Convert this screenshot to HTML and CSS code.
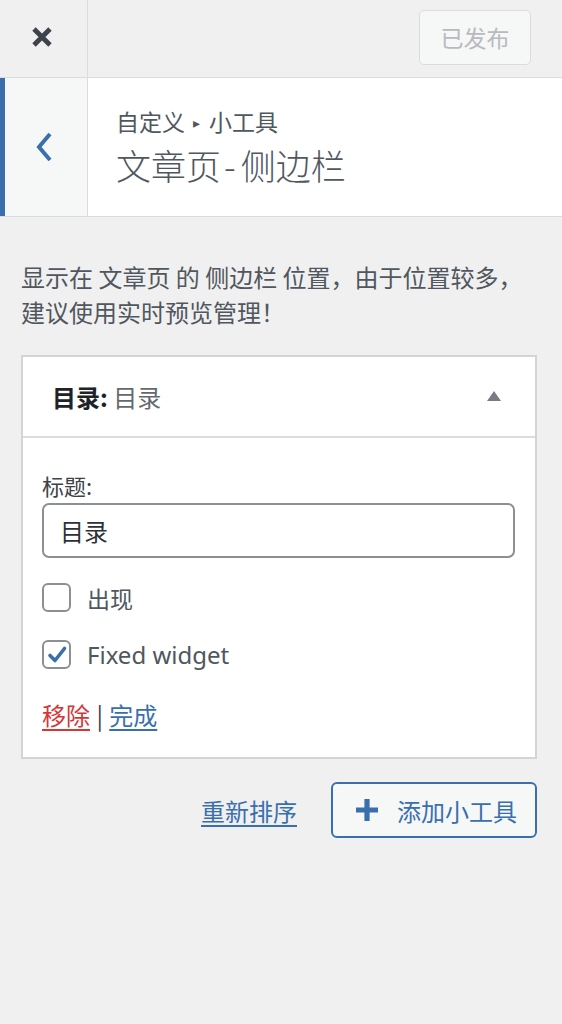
FILE: index.html
```html
<!DOCTYPE html>
<html lang="zh-CN">
<head>
<meta charset="utf-8">
<title>自定义 小工具</title>
<link rel="stylesheet" href="styles.css">
</head>
<body>
<div class="panel">
  <header class="topbar">
    <div class="close">
      <svg width="22" height="22" viewBox="0 0 22 22"><path d="M3 3 L19 19 M19 3 L3 19" stroke="#3c434a" stroke-width="4.8" stroke-linecap="butt" fill="none"/></svg>
    </div>
    <div class="topbar-fill"></div>
    <button class="publish" disabled>已发布</button>
  </header>

  <section class="section-head">
    <div class="back">
      <svg width="18" height="30" viewBox="0 0 18 30"><path d="M14 2 L3 15 L14 28" stroke="#3a6fae" stroke-width="4" fill="none" stroke-linejoin="miter"/></svg>
    </div>
    <div class="titles">
      <div class="crumb">自定义<span class="tri">▸</span>小工具</div>
      <div class="title">文章页<span class="dash">-</span>侧边栏</div>
    </div>
  </section>

  <p class="desc">显示在 文章页 的 侧边栏 位置，由于位置较多，<br>建议使用实时预览管理！</p>

  <div class="widget">
    <div class="widget-top">
      <div class="widget-title"><strong>目录:</strong> <span class="in-title">目录</span></div>
      <svg class="arrow" width="16" height="12" viewBox="0 0 16 12"><path d="M8 1 L15 11 L1 11 Z" fill="#787c82"/></svg>
    </div>
    <div class="widget-inside">
      <label class="field-label">标题:</label>
      <div class="input">目录</div>
      <div class="check-row">
        <span class="checkbox"></span>
        <span class="check-label">出现</span>
      </div>
      <div class="check-row">
        <span class="checkbox">
          <svg width="22" height="22" viewBox="0 0 22 22"><path d="M4 11.5 L9 16.5 L18.5 4.5" stroke="#3a6fae" stroke-width="3.6" fill="none" stroke-linecap="round" stroke-linejoin="round"/></svg>
        </span>
        <span class="check-label latin">Fixed widget</span>
      </div>
      <div class="actions">
        <a class="remove" href="#">移除</a> <span class="sep">|</span> <a class="done" href="#">完成</a>
      </div>
    </div>
  </div>

  <div class="footer-row">
    <a class="reorder" href="#">重新排序</a>
    <button class="add">
      <svg width="24" height="24" viewBox="0 0 24 24"><path d="M12 1 V23 M1 12 H23" stroke="#3a6fae" stroke-width="5.2" fill="none"/></svg>
      <span>添加小工具</span>
    </button>
  </div>
</div>
</body>
</html>
```
FILE: styles.css
```css
* { box-sizing: border-box; }
html, body { margin: 0; padding: 0; }
body {
  background: #f0f0f1;
  font-family: "Noto Sans", "Noto Sans CJK SC", sans-serif;
  font-size: 24px;
  color: #50575e;
  height: 1024px;
}
.panel { width: 562px; }

.topbar {
  display: flex;
  align-items: flex-start;
  height: 78px;
  border-bottom: 1px solid #dcdcde;
}
.close {
  width: 88px;
  height: 77px;
  border-right: 1px solid #dcdcde;
  display: flex;
  align-items: center;
  justify-content: center;
  padding-right: 3px;
  padding-bottom: 3px;
}
.topbar-fill { flex: 1; }
.publish {
  margin: 10px 31px 0 0;
  width: 112px;
  height: 55px;
  border: 1px solid #dcdcde;
  background: #f6f7f7;
  color: #b8babd;
  border-radius: 5px;
  font-family: "Noto Sans CJK SC", sans-serif;
  font-size: 23px;
  line-height: 1;
  padding: 0;
}

.section-head {
  display: flex;
  height: 139px;
  background: #fff;
  border-bottom: 1px solid #dcdcde;
}
.back {
  width: 88px;
  background: #f6f7f7;
  border-left: 5px solid #3a6fae;
  border-right: 1px solid #dcdcde;
  display: flex;
  align-items: center;
  justify-content: center;
  padding-right: 3px;
  padding-bottom: 1px;
}
.titles {
  padding: 25px 0 0 28px;
}
.crumb {
  font-family: "Noto Sans CJK SC", sans-serif;
  font-size: 23px;
  line-height: 36px;
  color: #50575e;
}
.tri { font-size: 14px; vertical-align: 3px; margin: 0 9px 0 8px; }
.title {
  font-family: "Noto Sans CJK SC", sans-serif;
  font-size: 35px;
  font-weight: 300;
  line-height: 50px;
  color: #50575e;
}
.dash { margin: 0 5px 0 3px; }

.desc {
  margin: 42px 0 0 0;
  padding: 0 21px;
  font-family: "Noto Sans CJK SC", sans-serif;
  font-size: 24px;
  line-height: 35px;
  color: #50575e;
}

.widget {
  margin: 26px 25px 0 21px;
  background: #fff;
  border: 2px solid #d3d4d7;
}
.widget-top {
  display: flex;
  align-items: center;
  justify-content: space-between;
  height: 81px;
  padding: 0 33px 0 29px;
  border-bottom: 2px solid #dcdcde;
}
.widget-title {
  font-family: "Noto Sans CJK SC", sans-serif;
  font-size: 24px;
  color: #1d2327;
}
.widget-title strong { font-weight: 700; }
.in-title { color: #646970; }
.arrow { margin-bottom: 2px; }

.widget-inside {
  padding: 30px 20px 25px 19px;
}
.field-label {
  display: block;
  font-family: "Noto Sans CJK SC", sans-serif;
  font-size: 22px;
  line-height: 34px;
  color: #3c434a;
}
.input {
  margin-top: 1px;
  height: 55px;
  border: 2px solid #8c8f94;
  border-radius: 7px;
  padding: 0 16px;
  display: flex;
  align-items: center;
  font-family: "Noto Sans CJK SC", sans-serif;
  font-size: 24px;
  color: #2c3338;
}
.check-row {
  display: flex;
  align-items: center;
  gap: 16px;
  height: 29px;
  margin-top: 25px;
}
.check-row + .check-row { margin-top: 28px; }
.checkbox {
  width: 29px;
  height: 29px;
  border: 2px solid #8c8f94;
  border-radius: 6px;
  background: #fff;
  display: flex;
  align-items: center;
  justify-content: center;
  flex: none;
}
.check-label {
  font-family: "Noto Sans CJK SC", sans-serif;
  font-size: 23px;
  color: #50575e;
}
.check-label.latin { font-family: "Noto Sans", "Noto Sans CJK SC", sans-serif; font-size: 24px; }

.actions {
  margin-top: 29px;
  font-family: "Noto Sans CJK SC", sans-serif;
  font-size: 24px;
  line-height: 34px;
  color: #50575e;
}
.actions a { text-underline-offset: 4px; }
.remove { color: #d63638; }
.done { color: #3a6fae; }
.sep { color: #3c434a; margin: 0 1px; }

.footer-row {
  display: flex;
  justify-content: flex-end;
  align-items: center;
  gap: 34px;
  margin: 23px 25px 0 0;
}
.reorder {
  font-family: "Noto Sans CJK SC", sans-serif;
  font-size: 24px;
  color: #3a6fae;
  text-underline-offset: 4px;
}
.add {
  display: flex;
  align-items: center;
  gap: 18px;
  height: 56px;
  width: 206px;
  padding: 0 0 0 22px;
  border: 2px solid #3a6fae;
  border-radius: 6px;
  background: #f6f7f7;
  color: #3a6fae;
  font-family: "Noto Sans CJK SC", sans-serif;
  font-size: 24px;
}
```
